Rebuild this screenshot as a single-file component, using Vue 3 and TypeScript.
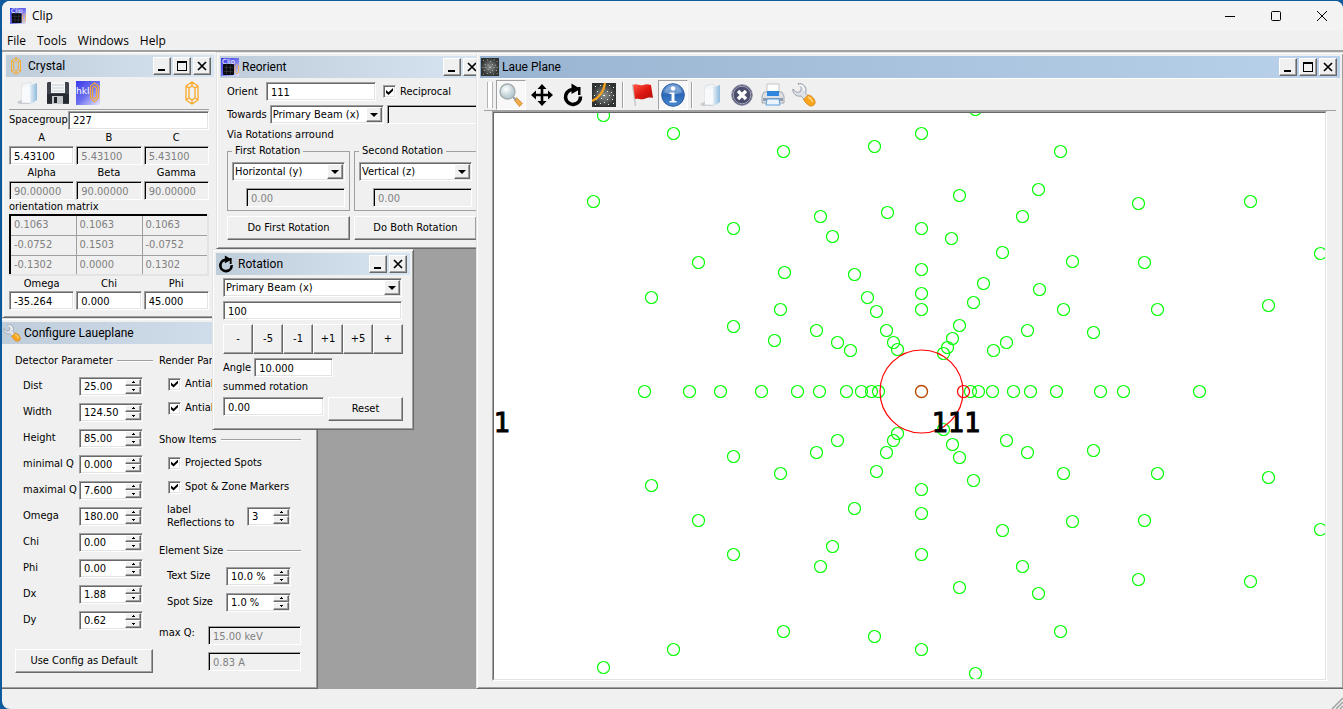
<script setup lang="ts">
import { ref, reactive } from 'vue'

type Spot = [number, number]

// Reflections that appear both above and below the horizontal axis.
const mirrored: Spot[] = [
  [-318, 276], [-248, 258], [-138, 240], [-47, 245], [0, 258], [54, 282], [139, 240], [117, 202], [38, 196],
  [-101, 175], [-188, 163], [0, 163], [-89, 155], [101, 175], [217, 188], [329, 190], [81, 139], [151, 130],
  [223, 129], [399, 138], [-223, 129], [0, 122], [-67, 117], [0, 98], [-270, 94], [-141, 82], [142, 82],
  [236, 82], [347, 86], [-45, 80], [52, 89], [-188, 65], [-105, 61], [-35, 61], [38, 66], [106, 61],
  [172, 59], [-84, 49], [-28, 49], [31, 53], [85, 49], [-24, 42], [22, 38],
]
const upperOnly: Spot[] = [
  [-328, 190], [-34, 179], [30, 153], [-137, 119], [62, 108], [118, 102], [-54, 94], [0, 82],
  [-147, 51], [-71, 41], [26, 44], [72, 41],
]
const axis = [-277, -232, -201, -160, -124, -102, -75, -60, -50, -43, 49, 57, 71, 92, 109, 135, 179, 202, 278]

const spots: Spot[] = [
  ...mirrored.flatMap(([x, y]): Spot[] => [[x, -y], [x, y]]),
  ...upperOnly.map(([x, y]): Spot => [x, -y]),
  ...axis.map((x): Spot => [x, 0]),
]

const menus = ['File', 'Tools', 'Windows', 'Help']
const spacegroup = ref('227')
const lengths = reactive([
  { label: 'A', value: '5.43100', locked: false },
  { label: 'B', value: '5.43100', locked: true },
  { label: 'C', value: '5.43100', locked: true },
])
const angles = reactive([
  { label: 'Alpha', value: '90.00000', locked: true },
  { label: 'Beta', value: '90.00000', locked: true },
  { label: 'Gamma', value: '90.00000', locked: true },
])
const euler = reactive([
  { label: 'Omega', value: '-35.264', locked: false },
  { label: 'Chi', value: '0.000', locked: false },
  { label: 'Phi', value: '45.000', locked: false },
])
const matrix = [
  ['0.1063', '0.1063', '0.1063'],
  ['-0.0752', '0.1503', '-0.0752'],
  ['-0.1302', '0.0000', '0.1302'],
]
const detector = reactive([
  { label: 'Dist', value: '25.00' },
  { label: 'Width', value: '124.50' },
  { label: 'Height', value: '85.00' },
  { label: 'minimal Q', value: '0.000' },
  { label: 'maximal Q', value: '7.600' },
  { label: 'Omega', value: '180.00' },
  { label: 'Chi', value: '0.00' },
  { label: 'Phi', value: '0.00' },
  { label: 'Dx', value: '1.88' },
  { label: 'Dy', value: '0.62' },
])
const sizes = reactive([
  { label: 'Text Size', value: '10.0 %' },
  { label: 'Spot Size', value: '1.0 %' },
])
const rotations = [
  { title: 'First Rotation', axis: 'Horizontal (y)' },
  { title: 'Second Rotation', axis: 'Vertical (z)' },
]
const steps = ['-', '-5', '-1', '+1', '+5', '+']
const reciprocal = ref(true)
const labelOrder = ref('3')
const rotAxis = ref('100')
const rotAngle = ref('10.000')
const rotSum = ref('0.00')
const orient = ref('111')
</script>

<template>
  <div class="desktop">
    <svg class="defs" width="0" height="0" aria-hidden="true">
      <defs>
        <linearGradient id="gBlue" x1="0" y1="0" x2="1" y2="1">
          <stop offset="0" stop-color="#3a3ae8" /><stop offset=".5" stop-color="#6d70ee" /><stop offset="1" stop-color="#e6e8ff" />
        </linearGradient>
        <linearGradient id="gFolder" x1="0" y1="0" x2="1" y2="0">
          <stop offset="0" stop-color="#fdfeff" /><stop offset="1" stop-color="#8fbbdc" />
        </linearGradient>
        <linearGradient id="gRed" x1="0" y1="0" x2="1" y2="1">
          <stop offset="0" stop-color="#ff5b4a" /><stop offset=".5" stop-color="#e01a12" /><stop offset="1" stop-color="#b00c08" />
        </linearGradient>
        <linearGradient id="gInfo" x1="0" y1="0" x2="0" y2="1">
          <stop offset="0" stop-color="#7aa7dd" /><stop offset=".5" stop-color="#2c68b8" /><stop offset="1" stop-color="#4b8ad0" />
        </linearGradient>
        <radialGradient id="gPlane">
          <stop offset="0" stop-color="#8d918f" /><stop offset="1" stop-color="#2f3231" />
        </radialGradient>
        <radialGradient id="gLens" cx=".4" cy=".35">
          <stop offset="0" stop-color="#ffffff" /><stop offset="1" stop-color="#bcd0d6" />
        </radialGradient>
      </defs>
      <symbol id="i-clip" viewBox="0 0 18 18">
        <rect width="18" height="18" fill="url(#gBlue)" />
        <text x="1" y="6" font-size="7" fill="#fff" font-family="DejaVu Sans, sans-serif">Clip</text>
        <rect x="2" y="6" width="11" height="11" rx="1" fill="#0b0b12" />
        <path d="M3 9.500h9M3 13.500h9M5.500 7v9M9.500 7v9" stroke="#3c4348" stroke-width=".6" />
        <path d="M14 8l2-1.500 1.500 1.500v6l-1.500 2-2-2z" fill="none" stroke="#f5b459" />
      </symbol>
      <symbol id="i-crystal" viewBox="0 0 16 24">
        <path d="M8 1l6 4v14l-6 4-6-4V5zM5 7l3-2 3 2v10l-3 2-3-2zM2 5l3 2M14 5l-3 2M8 1v4M2 19l3-2M14 19l-3-2M8 19v4" fill="none" stroke="#fba826" stroke-width="1.300" />
      </symbol>
      <symbol id="i-folder" viewBox="0 0 24 24">
        <path d="M1 21l6-3 8 1-1 4H3z" fill="#b9bfc4" opacity=".7" />
        <path d="M6 3l9-2v20l-9 1z" fill="#f2f5f7" stroke="#d3d9dd" stroke-width=".6" />
        <path d="M12 5l9-3v17l-6 4z" fill="url(#gFolder)" />
        <path d="M6 6l8-1v17l-8-1z" fill="#f8fafb" />
      </symbol>
      <symbol id="i-disk" viewBox="0 0 24 24">
        <path d="M2 1h20l1 1v21H1V2z" fill="#3e434b" />
        <rect x="5" y="1" width="14" height="11" fill="#f4f6f7" />
        <path d="M6 4h12M6 7h12M6 10h12" stroke="#c9d0d4" />
        <path d="M1 13h22v9H1z" fill="#262a31" />
        <rect x="6" y="15" width="11" height="8" fill="#c3c7ca" />
        <rect x="8" y="16" width="3" height="6" fill="#1e2127" />
      </symbol>
      <symbol id="i-hkl" viewBox="0 0 24 24">
        <rect width="24" height="24" fill="url(#gBlue)" />
        <text x="0" y="13" font-size="9" fill="#fff" font-family="DejaVu Sans, sans-serif">hkl</text>
        <path d="M18.500 2l4 3v12l-4 4-4-4V5zM16.500 7l2-2 2 2v9l-2 2-2-2z" fill="none" stroke="#f3a640" stroke-width="1.200" />
      </symbol>
      <symbol id="i-wrench" viewBox="0 0 24 24">
        <path d="M6 .5c4-.5 8 2 8 6.500 0 1 0 2-.5 3l3 3.500-4 3.500-3.500-4C4 14 .5 10.500 .8 6l4 3.500 3.700-1 .8-3.500z" fill="#dde2e8" stroke="#8d939d" stroke-width=".8" />
        <path d="M7 2.500c3 0 5 2 5 5" fill="none" stroke="#fff" stroke-width="1.200" />
        <path d="M11.500 16.500l4.500-4.500c3 0 6 3 7 6 1 4-3 6-6 4.500-2.500-1.500-4-3.500-5.500-6z" fill="#f9a51e" stroke="#d27c0c" stroke-width=".7" />
        <path d="M16 14c2.500 1 4 3 5 5" fill="none" stroke="#ffd98a" stroke-width="1.500" />
      </symbol>
      <symbol id="i-rotate" viewBox="0 0 24 24">
        <path d="M11 6.500a7.500 7.500 0 1 0 8.500 7" fill="none" stroke="#000" stroke-width="3.600" />
        <path d="M10.500 .5l9 5.500-9 5z" fill="#000" />
        <path d="M17 4h2.500v8H17z" fill="#000" />
      </symbol>
      <symbol id="i-plane" viewBox="0 0 24 24">
        <rect width="24" height="24" fill="url(#gPlane)" />
        <g fill="#dff5df">
          <path d="M3 3h1v1H3zM8 2h1v1H8zM12 4h1v1h-1zM17 2h1v1h-1zM21 4h1v1h-1zM5 8h1v1H5zM9 9h1v1H9zM15 8h1v1h-1zM19 9h1v1h-1zM2 12h1v1H2zM6 12h1v1H6zM11 12h2v1h-2zM17 12h1v1h-1zM21 12h1v1h-1zM4 16h1v1H4zM9 15h1v1H9zM15 16h1v1h-1zM20 16h1v1h-1zM3 21h1v1H3zM8 20h1v1H8zM12 19h1v1h-1zM16 21h1v1h-1zM21 20h1v1h-1z" />
        </g>
      </symbol>
      <symbol id="i-zone" viewBox="0 0 24 24">
        <use href="#i-plane" width="24" height="24" />
        <path d="M0 18C7 15 12 8 13 0" fill="none" stroke="#f5a21d" stroke-width="2.400" />
      </symbol>
      <symbol id="i-zoom" viewBox="0 0 24 24">
        <path d="M15 17l2.500-2.500 6 6-3 3z" fill="#efab45" stroke="#b9761c" stroke-width=".6" />
        <path d="M14 14l3 3" stroke="#9aa0a2" stroke-width="2" />
        <circle cx="8.500" cy="8.500" r="7.500" fill="url(#gLens)" stroke="#a3abae" stroke-width="1.400" />
      </symbol>
      <symbol id="i-move" viewBox="0 0 24 24">
        <path d="M12 4v16M4 12h16" stroke="#000" stroke-width="2.600" />
        <path d="M12 1l4.500 5h-9zM12 23l4.500-5h-9zM1 12l5-4.500v9zM23 12l-5-4.500v9z" />
      </symbol>
      <symbol id="i-flag" viewBox="0 0 24 24">
        <path d="M2.500 1l3 22" stroke="#c9c9c9" stroke-width="1.600" />
        <path d="M3 2c4-2 6 1 10 0 3-1 5-1 8 0l2 13c-4-1-6 0-9 1-4 1-6-1-9 0z" fill="url(#gRed)" />
      </symbol>
      <symbol id="i-info" viewBox="0 0 24 24">
        <circle cx="12" cy="12" r="11.300" fill="url(#gInfo)" stroke="#2a5a9c" />
        <path d="M3 9a10 10 0 0 1 18 0c-5 3-13 3-18 0z" fill="#fff" opacity=".25" />
        <circle cx="12" cy="5.500" r="2.200" fill="#fff" />
        <path d="M8.500 9.500h5V18h2v1.500h-7V18h2v-7h-2z" fill="#fff" />
      </symbol>
      <symbol id="i-stop" viewBox="0 0 24 24">
        <circle cx="12" cy="12" r="10.300" fill="#4b4d6d" stroke="#8c8ea5" />
        <circle cx="12" cy="12" r="8.800" fill="none" stroke="#b9bacb" stroke-width=".8" />
        <path d="M8 8l8 8M16 8l-8 8" stroke="#fff" stroke-width="3.400" />
      </symbol>
      <symbol id="i-printer" viewBox="0 0 24 24">
        <path d="M6 1h12v11H6z" fill="#fdfdfd" stroke="#b4bac0" stroke-width=".8" />
        <path d="M3 9h18l2 4v7H1v-7z" fill="#dde1e6" stroke="#8f98a3" stroke-width=".8" />
        <path d="M6 8h12v5H6z" fill="#2f86dc" />
        <path d="M2 15h20v3H2z" fill="#939dab" />
        <path d="M6 16h12l1 6H5z" fill="#e9f4fd" stroke="#4f98dc" stroke-width=".9" />
      </symbol>
      <symbol id="i-min" viewBox="0 0 12 12"><path d="M2 9h7v2H2z" /></symbol>
      <symbol id="i-max" viewBox="0 0 12 12"><path d="M1 1h10v10H1zM2 3v7h8V3z" fill-rule="evenodd" /></symbol>
      <symbol id="i-close" viewBox="0 0 12 12"><path d="M2 2l8 8M10 2l-8 8" stroke="#000" stroke-width="1.700" /></symbol>
      <symbol id="i-up" viewBox="0 0 5 3"><path d="M2 0h1v1h1v1H1V1h1z" shape-rendering="crispEdges" /></symbol>
      <symbol id="i-down" viewBox="0 0 5 3"><path d="M1 1h3v1H3v1H2V2H1z" shape-rendering="crispEdges" /></symbol>
    </svg>

    <main class="app">
      <header class="titlebar">
        <svg class="app-icon"><use href="#i-clip" /></svg>
        <span class="app-name">Clip</span>
        <button class="sys" aria-label="Minimize"><svg viewBox="0 0 12 12"><path d="M1 6.500h10" /></svg></button>
        <button class="sys" aria-label="Maximize"><svg viewBox="0 0 12 12"><rect x="1.500" y="1.500" width="9" height="9" rx="1" /></svg></button>
        <button class="sys" aria-label="Close"><svg viewBox="0 0 12 12"><path d="M1 1l10 10M11 1L1 11" /></svg></button>
      </header>
      <nav class="menubar">
        <button v-for="m in menus" :key="m">{{ m }}</button>
      </nav>

      <div class="mdi">
        <!-- Crystal -->
        <section class="win crystal">
          <div class="cap">
            <svg class="cap-icon"><use href="#i-crystal" /></svg>
            <h2>Crystal</h2>
            <button aria-label="Minimize"><svg><use href="#i-min" /></svg></button>
            <button aria-label="Maximize"><svg><use href="#i-max" /></svg></button>
            <button aria-label="Close"><svg><use href="#i-close" /></svg></button>
          </div>
          <div class="crystal-body">
            <div class="crystal-tools">
              <button aria-label="Open"><svg><use href="#i-folder" /></svg></button>
              <button aria-label="Save"><svg><use href="#i-disk" /></svg></button>
              <button aria-label="Reflections"><svg><use href="#i-hkl" /></svg></button>
              <button class="push" aria-label="Crystal"><svg><use href="#i-crystal" /></svg></button>
            </div>
            <div class="sg">
              <label for="sg">Spacegroup</label>
              <input id="sg" v-model="spacegroup" class="edit" />
            </div>
            <div class="triple">
              <label v-for="f in lengths" :key="f.label">{{ f.label }}<input v-model="f.value" class="edit" :disabled="f.locked" /></label>
            </div>
            <div class="triple">
              <label v-for="f in angles" :key="f.label">{{ f.label }}<input v-model="f.value" class="edit" :disabled="f.locked" /></label>
            </div>
            <table class="matrix">
              <caption>orientation matrix</caption>
              <tbody>
                <tr v-for="(r, i) in matrix" :key="i"><td v-for="(c, j) in r" :key="j">{{ c }}</td></tr>
              </tbody>
            </table>
            <div class="triple euler">
              <label v-for="f in euler" :key="f.label">{{ f.label }}<input v-model="f.value" class="edit" :disabled="f.locked" /></label>
            </div>
          </div>
        </section>

        <!-- Configure -->
        <section class="win config">
          <div class="cap">
            <svg class="cap-icon"><use href="#i-wrench" /></svg>
            <h2>Configure Laueplane</h2>
          </div>
          <div class="config-body">
            <div class="col">
              <h3>Detector Parameter</h3>
              <div v-for="(d, i) in detector" :key="i" class="field">
                <label :for="'det' + i">{{ d.label }}</label>
                <span class="spin wide">
                  <input :id="'det' + i" v-model="d.value" />
                  <span class="arrows">
                    <button aria-label="Increase"><svg><use href="#i-up" /></svg></button>
                    <button aria-label="Decrease"><svg><use href="#i-down" /></svg></button>
                  </span>
                </span>
              </div>
              <button class="btn default">Use Config as Default</button>
            </div>
            <div class="col">
              <h3>Render Parameter</h3>
              <label class="tick"><input type="checkbox" checked />Antialiasing</label>
              <label class="tick"><input type="checkbox" checked />Antialias Text</label>
              <h3 class="show">Show Items</h3>
              <label class="tick"><input type="checkbox" checked />Projected Spots</label>
              <label class="tick"><input type="checkbox" checked />Spot &amp; Zone Markers</label>
              <div class="field order">
                <label for="order">label<br />Reflections to</label>
                <span class="spin small">
                  <input id="order" v-model="labelOrder" />
                  <span class="arrows">
                    <button aria-label="Increase"><svg><use href="#i-up" /></svg></button>
                    <button aria-label="Decrease"><svg><use href="#i-down" /></svg></button>
                  </span>
                </span>
              </div>
              <h3 class="elem">Element Size</h3>
              <div v-for="(s, i) in sizes" :key="i" class="field size">
                <label :for="'size' + i">{{ s.label }}</label>
                <span class="spin">
                  <input :id="'size' + i" v-model="s.value" />
                  <span class="arrows">
                    <button aria-label="Increase"><svg><use href="#i-up" /></svg></button>
                    <button aria-label="Decrease"><svg><use href="#i-down" /></svg></button>
                  </span>
                </span>
              </div>
              <div class="maxq">
                <label for="mq">max Q:</label>
                <input id="mq" class="edit" value="15.00 keV" disabled />
                <input class="edit" value="0.83 A" aria-label="Wavelength" disabled />
              </div>
            </div>
          </div>
        </section>

        <!-- Reorient -->
        <section class="win reorient">
          <div class="cap">
            <svg class="cap-icon"><use href="#i-clip" /></svg>
            <h2>Reorient</h2>
            <button aria-label="Minimize"><svg><use href="#i-min" /></svg></button>
            <button aria-label="Close"><svg><use href="#i-close" /></svg></button>
          </div>
          <div class="reorient-body">
            <div class="line">
              <label for="orient" class="lead">Orient</label>
              <input id="orient" v-model="orient" class="edit orient" />
              <label class="tick"><input v-model="reciprocal" type="checkbox" />Reciprocal</label>
            </div>
            <div class="line">
              <label for="towards">Towards</label>
              <span class="combo towards"><select id="towards"><option>Primary Beam (x)</option></select><i></i></span>
              <input class="edit grow" disabled aria-label="Direction" />
            </div>
            <p>Via Rotations arround</p>
            <div class="pair">
              <fieldset v-for="r in rotations" :key="r.title">
                <legend>{{ r.title }}</legend>
                <span class="combo"><select :aria-label="r.title"><option>{{ r.axis }}</option></select><i></i></span>
                <input class="edit" value="0.00" disabled :aria-label="r.title + ' angle'" />
              </fieldset>
            </div>
            <div class="pair">
              <button class="btn">Do First Rotation</button>
              <button class="btn">Do Both Rotation</button>
            </div>
          </div>
        </section>

        <!-- Rotation -->
        <section class="win rotation">
          <div class="cap">
            <svg class="cap-icon"><use href="#i-rotate" /></svg>
            <h2>Rotation</h2>
            <button aria-label="Minimize"><svg><use href="#i-min" /></svg></button>
            <button aria-label="Close"><svg><use href="#i-close" /></svg></button>
          </div>
          <div class="rotation-body">
            <span class="combo"><select aria-label="Axis"><option>Primary Beam (x)</option></select><i></i></span>
            <input v-model="rotAxis" class="edit pad" aria-label="Axis index" />
            <div class="steps"><button v-for="s in steps" :key="s" class="btn">{{ s }}</button></div>
            <div class="line">
              <label for="angle">Angle</label>
              <input id="angle" v-model="rotAngle" class="edit angle" />
            </div>
            <label for="sum" class="sumlabel">summed rotation</label>
            <div class="sum">
              <input id="sum" v-model="rotSum" class="edit" />
              <button class="btn">Reset</button>
            </div>
          </div>
        </section>

        <!-- Laue plane -->
        <section class="win laue">
          <div class="cap active">
            <svg class="cap-icon"><use href="#i-plane" /></svg>
            <h2>Laue Plane</h2>
            <button aria-label="Minimize"><svg><use href="#i-min" /></svg></button>
            <button aria-label="Maximize"><svg><use href="#i-max" /></svg></button>
            <button aria-label="Close"><svg><use href="#i-close" /></svg></button>
          </div>
          <div class="tools">
            <span class="handle"></span>
            <button class="on" aria-label="Zoom"><svg><use href="#i-zoom" /></svg></button>
            <button aria-label="Move"><svg><use href="#i-move" /></svg></button>
            <button aria-label="Rotate"><svg><use href="#i-rotate" /></svg></button>
            <button aria-label="Zone"><svg><use href="#i-zone" /></svg></button>
            <span class="sep"></span>
            <button aria-label="Mark"><svg><use href="#i-flag" /></svg></button>
            <button class="on" aria-label="Info"><svg><use href="#i-info" /></svg></button>
            <span class="sep"></span>
            <button aria-label="Open"><svg><use href="#i-folder" /></svg></button>
            <button aria-label="Close image"><svg><use href="#i-stop" /></svg></button>
            <button aria-label="Print"><svg><use href="#i-printer" /></svg></button>
            <button aria-label="Configure"><svg><use href="#i-wrench" /></svg></button>
          </div>
          <div class="plot">
            <svg viewBox="0 0 831 566" role="img" aria-label="Laue pattern">
              <g transform="translate(427.5 278.5)" fill="none">
                <circle v-for="([x, y], i) in spots" :key="i" :cx="x" :cy="y" r="6" stroke="#00ff00" stroke-width="1.200" />
                <circle r="6" stroke="#b84800" stroke-width="1.400" />
                <circle cx="42" r="6" stroke="#ff0000" stroke-width="1.200" />
                <circle r="41.500" stroke="#ff0000" stroke-width="1.200" />
                <g class="marks" fill="#000">
                  <text x="10" y="40">111</text>
                  <text x="-428" y="40">1</text>
                </g>
              </g>
            </svg>
          </div>
        </section>
      </div>

      <footer class="status">
        <svg viewBox="0 0 12 12"><path d="M1 12L12 1M5 12l7-7M9 12l3-3" stroke="#a0a0a0" stroke-width="1.500" /></svg>
      </footer>
    </main>
  </div>
</template>

<style>
html, body { margin: 0; height: 100%; background: #0f5a9c; }
</style>

<style scoped>
.desktop {
  height: 100vh;
  box-sizing: border-box;
  padding: 1px 0 0 2px;
  background: #0f5a9c;
  overflow: hidden;
  font: 11px/14px "DejaVu Sans Condensed", "Noto Sans", sans-serif;
  color: #000;
}
.desktop *, .desktop *::before, .desktop *::after { box-sizing: border-box; }
.defs { position: absolute; }
button, input, select { font: inherit; color: inherit; margin: 0; padding: 0; border-radius: 0; border: 0; background: none; }
h2, h3, p { margin: 0; font: inherit; }
button svg { display: block; }

.app { display: flex; flex-direction: column; height: 100%; background: #f0f0f0; border-radius: 8px 8px 0 8px; overflow: hidden; }
.titlebar { display: flex; align-items: center; height: 30px; flex: none; background: #f3f3f3; padding-left: 8px; margin-right: -2px; }
.app-icon { width: 16px; height: 16px; }
.app-name { flex: 1; margin-left: 6px; font: 12px/16px "Open Sans", "Noto Sans", sans-serif; }
.sys { width: 46px; height: 30px; display: grid; place-items: center; }
.sys svg { width: 12px; height: 12px; fill: none; stroke: #000; }
.menubar { display: flex; height: 21px; flex: none; gap: 11px; padding-left: 5px; border-bottom: 2px solid #a0a0a0; }
.menubar button { font: 12px/18px "Open Sans", "Noto Sans", sans-serif; }
.mdi { position: relative; flex: 1; background: #a0a0a0; overflow: hidden; }
.status { height: 20px; flex: none; display: flex; justify-content: flex-end; align-items: flex-end; }
.status svg { width: 12px; height: 12px; }

.win {
  position: absolute;
  background: #f0f0f0;
  border: 1px solid;
  border-color: #e3e3e3 #696969 #696969 #e3e3e3;
  box-shadow: inset 1px 1px #fff, inset -1px -1px #a0a0a0;
  padding: 3px;
}
.crystal { left: 0; top: -1px; width: 216px; height: 267px; }
.config { left: -4px; top: 266px; width: 320px; height: 371px; }
.reorient { left: 214px; top: 0; width: 272px; height: 197px; }
.rotation { left: 210px; top: 197px; width: 202px; height: 181px; }
.laue { left: 474px; right: -1px; top: 0; bottom: 0; display: flex; flex-direction: column; }

.cap { display: flex; align-items: center; gap: 2px; height: 22px; flex: none; padding: 0 3px 0 0; background: linear-gradient(90deg, #bfcddb, #d7e4f2); }
.cap.active { background: linear-gradient(90deg, #99b4d1, #b9d1ea); }
.cap-icon { width: 20px; height: 18px; }
.cap h2 { flex: 1; font: 12px/16px Roboto, "Noto Sans", sans-serif; white-space: nowrap; }
.cap button { width: 18px; height: 18px; display: grid; place-items: center; }
.cap button svg { width: 12px; height: 12px; }
.cap button, .btn, .arrows button, .combo i {
  background: #f0f0f0;
  border: 1px solid;
  border-color: #fff #696969 #696969 #fff;
  box-shadow: inset -1px -1px #a0a0a0;
}
.btn { height: 24px; text-align: center; }

.edit, .spin, .combo {
  height: 19px;
  background: #fff;
  border: 1px solid;
  border-color: #a0a0a0 #fff #fff #a0a0a0;
  box-shadow: inset 1px 1px #696969, inset -1px -1px #e3e3e3;
}
.edit { display: block; min-width: 0; width: 100%; padding: 1px 4px 0; }
.edit:disabled { background: #f0f0f0; color: #808080; box-shadow: inset 1px 1px #000; opacity: 1; }

.combo { display: flex; position: relative; padding: 1px; }
.combo select { appearance: none; width: 100%; padding: 1px 16px 0 1px; outline: 0; }
.combo i { position: absolute; right: 1px; top: 1px; bottom: 1px; width: 16px; display: grid; place-items: center; pointer-events: none; }
.combo i::after { content: ""; border: 4px solid transparent; border-top-color: #000; border-bottom: 0; }

.spin { display: flex; padding: 1px; width: 65px; }
.spin input { flex: 1; min-width: 0; padding-left: 3px; padding-top: 1px; outline: 0; }
.spin.wide { width: 64px; }
.spin.small { width: 44px; }
.arrows { display: flex; flex-direction: column; width: 16px; }
.arrows button { flex: 1; min-height: 0; display: grid; place-items: center; }
.arrows svg { width: 5px; height: 3px; }

.tick { display: flex; align-items: center; gap: 4px; white-space: nowrap; }
.tick input {
  appearance: none; width: 13px; height: 13px; background: #fff; flex: none;
  border: 1px solid; border-color: #a0a0a0 #fff #fff #a0a0a0;
  box-shadow: inset 1px 1px #696969, inset -1px -1px #e3e3e3;
  display: grid; place-items: center;
}
.tick input:checked::after { content: ""; width: 7px; height: 7px; background: #000; clip-path: polygon(0 28%, 36% 62%, 100% 0, 100% 40%, 36% 100%, 0 68%); }

.crystal-body { padding: 0 5px 0 3px; display: flex; flex-direction: column; }
.crystal-tools { display: flex; align-items: center; height: 33px; gap: 6px; padding: 0 5px 0 7px; border-bottom: 1px solid #a0a0a0; }
.crystal-tools svg { width: 24px; height: 24px; }
.crystal-tools .push { margin-left: auto; }
.sg { display: flex; align-items: center; height: 20px; gap: 1px; white-space: nowrap; }
.sg label { flex: none; width: 58px; }
.triple { display: grid; grid-template-columns: repeat(3, 1fr); gap: 2px; }
.triple label { display: block; text-align: center; line-height: 16px; min-width: 0; }
.triple.euler label { line-height: 15px; }
.matrix { border-collapse: collapse; table-layout: fixed; width: 100%; border: 2px solid; border-color: #000 #e3e3e3 #e3e3e3 #000; color: #808080; }
.matrix caption { text-align: left; color: #000; height: 14px; line-height: 14px; }
.matrix td { border: 1px solid #a0a0a0; padding: 0 3px; height: 20px; line-height: 16px; }

.config-body { display: grid; grid-template-columns: 138px 142px; gap: 6px; padding: 9px 13px; }
.col { display: flex; flex-direction: column; }
.col h3 { display: flex; align-items: center; gap: 4px; height: 16px; white-space: nowrap; }
.col h3::after { content: ""; flex: 1; border-top: 1px solid #a0a0a0; border-bottom: 1px solid #fff; }
.field { display: flex; align-items: center; justify-content: space-between; height: 26px; padding: 0 10px 0 8px; }
.col h3 + .field { margin-top: 4px; }
.default { margin-top: 16px; }
.col .tick { height: 24px; padding-left: 9px; gap: 4px; }
.col h3 + .tick { margin-top: 3px; }
.show { margin-top: 12px; }
.order { height: 34px; line-height: 13px; }
.elem { margin-top: 10px; }
.maxq { display: grid; grid-template-columns: 49px 93px; row-gap: 7px; margin-top: 11px; }
.maxq .edit { grid-column: 2; }

.reorient-body { padding: 2px 7px; display: flex; flex-direction: column; }
.line { display: flex; align-items: center; height: 23px; gap: 3px; white-space: nowrap; }
.lead { width: 36px; }
.orient { width: 110px; }
.line .tick { margin-left: 4px; }
.towards { width: 114px; flex: none; }
.line .grow { flex: 1; }
.reorient-body p { height: 18px; line-height: 17px; }
.pair { display: grid; grid-template-columns: 1fr 1fr; gap: 4px; }
fieldset { margin: 0 0 5px; padding: 4px 4px 3px; border: 1px solid #a0a0a0; min-width: 0; display: flex; flex-direction: column; gap: 7px; }
legend { padding: 0 3px; margin-left: 0; line-height: 14px; }
fieldset .edit { width: 99px; margin-left: 14px; }

.rotation-body { padding: 3px 7px; display: flex; flex-direction: column; gap: 4px; }
.rotation-body .combo, .rotation-body .pad { width: 179px; }
.rotation-body .line { height: 19px; }
.steps { display: grid; grid-template-columns: repeat(6, 1fr); }
.steps .btn { height: 30px; }
.edit.angle { width: 79px; }
.sumlabel { height: 12px; line-height: 12px; }
.sum { display: grid; grid-template-columns: 101px 1fr; gap: 4px; }

.tools { display: flex; align-items: center; gap: 1px; height: 33px; flex: none; margin: 0 4px; padding-left: 3px; border-bottom: 1px solid #a0a0a0; border-top: 1px solid #fff; }
.tools button { width: 30px; height: 30px; display: grid; place-items: center; border: 1px solid transparent; }
.tools button svg { width: 24px; height: 24px; }
.tools .on { border-color: #a0a0a0 #fff #fff #a0a0a0; background: #f8f8f8; }
.tools .handle { width: 6px; height: 26px; margin-right: 2px; border: 1px solid #b4b4b4; border-width: 0 1px; background: #fff; }
.tools .sep { width: 2px; height: 26px; margin: 0 2px; border-left: 1px solid #a0a0a0; border-right: 1px solid #fff; }
.plot {
  flex: 1; min-height: 0; margin: 0 13px 4px 12px; background: #fff;
  border: 1px solid; border-color: #a0a0a0 #fff #fff #a0a0a0;
}
.plot svg { display: block; width: 100%; height: 100%; border: 1px solid; border-color: #696969 #e3e3e3 #e3e3e3 #696969; }
.marks { font: 27px "DejaVu Sans Mono", monospace; stroke: #000; stroke-width: 1px; }
</style>
